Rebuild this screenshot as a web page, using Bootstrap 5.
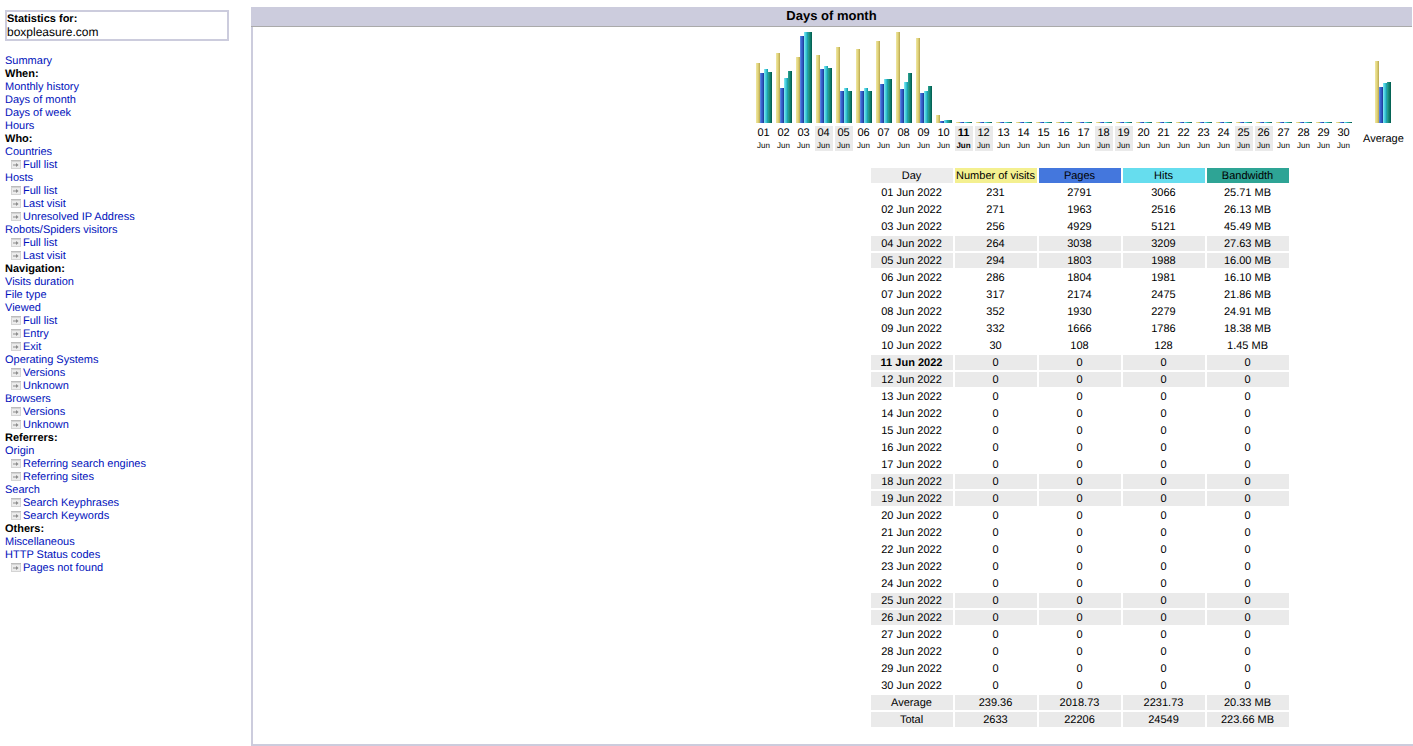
<!DOCTYPE html>
<html lang="en">
<head>
<meta charset="utf-8">
<title>Statistics for boxpleasure.com</title>
<link href="https://cdn.jsdelivr.net/npm/bootstrap@5.3.0/dist/css/bootstrap.min.css" rel="stylesheet">
<style>
html,body{height:746px;overflow:hidden}
body{background:#fff;color:#000;font:11px/13px "Liberation Sans",Arial,sans-serif;text-rendering:geometricPrecision}
a{color:#0011bb;text-decoration:none}
.shell{height:746px}
.side{width:251px;padding:10px 22px 0 5px}
.sitebox{height:31px;border:2px solid #ccccdd;padding:1px 0 0;line-height:13px;margin-bottom:14px}
.sitebox div+div{font-size:12px;line-height:13px}
.menu-sub{padding-left:6px}
.menu-sub svg{display:inline-block;vertical-align:-1px;margin-right:2px}
.menu-line{height:13px;white-space:nowrap}
.main{padding-top:7px;min-width:0}
.head-band{height:20px;margin-right:1px;background:#ccccdd;border-bottom:1px solid #aaaaaa;font-size:13px;line-height:18px;font-weight:700}
.body-band{height:719px;border-left:2px solid #ccccdd;border-bottom:2px solid #ccccdd;padding:5px 0 0 502px}
.plot{gap:2px}
.plot-col{width:18px}
.plot-avg{width:56px}
.bars{height:91px}
.pillar{width:4px;height:1px}
.pv{background:linear-gradient(90deg,#efe7a4,#e6da84 35%,#d4c46c 70%,#b4a44c)}
.pp{background:linear-gradient(90deg,#6490e8,#3c66d0 35%,#2e50b8 70%,#18348c)}
.ph{background:linear-gradient(90deg,#8aeaf4,#50d4e2 35%,#2cb8c8 70%,#14909f)}
.pk{background:linear-gradient(90deg,#2ea495,#1a8c7c 35%,#0a7464 70%,#00584a)}
.tick{height:25px;margin-top:3px;padding:1px 1px 0 0;text-align:center;font-size:11px;line-height:13px}
.tick small{display:block;font-size:8px;line-height:10px;margin-top:1px}
.tick-off{background:#eaeaea}
.tick-avg{height:25px;margin-top:3px;padding-top:7px;text-align:center;font-size:11px;line-height:13px;width:40px;margin-left:8px}
.stats{border-collapse:separate;border-spacing:2px;table-layout:fixed;width:422px;margin:15px 0 0 114px}
.stats td{width:82px;height:15px;padding:1px 1px 0 0;text-align:center;font-size:11px;line-height:14px;background:transparent}
.stats tr.shade td{background:#eaeaea}
.stats tr.top td:nth-child(1){background:#ececec}
.stats tr.top td:nth-child(2){background:#f4f090}
.stats tr.top td:nth-child(3){background:#4477dd}
.stats tr.top td:nth-child(4){background:#66ddee}
.stats tr.top td:nth-child(5){background:#2ea495}
</style>
</head>
<body>
<svg width="0" height="0" class="d-block position-absolute"><defs>
<symbol id="go" viewBox="0 0 10 9"><rect width="10" height="9" fill="#d4d4d4"/><rect y="0" width="10" height="1" fill="#bcbcbc"/><rect x="1" y="2" width="8" height="6" fill="#ececec"/><path d="M2 4.4h3V3l2.6 2L5 7V5.6H2z" fill="#8c8c8c"/></symbol>
</defs></svg>
<div class="shell d-flex">
<div class="side flex-shrink-0">
<div class="sitebox"><div class="fw-bold">Statistics for:</div><div>boxpleasure.com</div></div>
<div class="menu-line"><a href="#">Summary</a></div>
<div class="menu-line fw-bold">When:</div>
<div class="menu-line"><a href="#">Monthly history</a></div>
<div class="menu-line"><a href="#">Days of month</a></div>
<div class="menu-line"><a href="#">Days of week</a></div>
<div class="menu-line"><a href="#">Hours</a></div>
<div class="menu-line fw-bold">Who:</div>
<div class="menu-line"><a href="#">Countries</a></div>
<div class="menu-line menu-sub"><svg width="10" height="9"><use href="#go"/></svg><a href="#">Full list</a></div>
<div class="menu-line"><a href="#">Hosts</a></div>
<div class="menu-line menu-sub"><svg width="10" height="9"><use href="#go"/></svg><a href="#">Full list</a></div>
<div class="menu-line menu-sub"><svg width="10" height="9"><use href="#go"/></svg><a href="#">Last visit</a></div>
<div class="menu-line menu-sub"><svg width="10" height="9"><use href="#go"/></svg><a href="#">Unresolved IP Address</a></div>
<div class="menu-line"><a href="#">Robots/Spiders visitors</a></div>
<div class="menu-line menu-sub"><svg width="10" height="9"><use href="#go"/></svg><a href="#">Full list</a></div>
<div class="menu-line menu-sub"><svg width="10" height="9"><use href="#go"/></svg><a href="#">Last visit</a></div>
<div class="menu-line fw-bold">Navigation:</div>
<div class="menu-line"><a href="#">Visits duration</a></div>
<div class="menu-line"><a href="#">File type</a></div>
<div class="menu-line"><a href="#">Viewed</a></div>
<div class="menu-line menu-sub"><svg width="10" height="9"><use href="#go"/></svg><a href="#">Full list</a></div>
<div class="menu-line menu-sub"><svg width="10" height="9"><use href="#go"/></svg><a href="#">Entry</a></div>
<div class="menu-line menu-sub"><svg width="10" height="9"><use href="#go"/></svg><a href="#">Exit</a></div>
<div class="menu-line"><a href="#">Operating Systems</a></div>
<div class="menu-line menu-sub"><svg width="10" height="9"><use href="#go"/></svg><a href="#">Versions</a></div>
<div class="menu-line menu-sub"><svg width="10" height="9"><use href="#go"/></svg><a href="#">Unknown</a></div>
<div class="menu-line"><a href="#">Browsers</a></div>
<div class="menu-line menu-sub"><svg width="10" height="9"><use href="#go"/></svg><a href="#">Versions</a></div>
<div class="menu-line menu-sub"><svg width="10" height="9"><use href="#go"/></svg><a href="#">Unknown</a></div>
<div class="menu-line fw-bold">Referrers:</div>
<div class="menu-line"><a href="#">Origin</a></div>
<div class="menu-line menu-sub"><svg width="10" height="9"><use href="#go"/></svg><a href="#">Referring search engines</a></div>
<div class="menu-line menu-sub"><svg width="10" height="9"><use href="#go"/></svg><a href="#">Referring sites</a></div>
<div class="menu-line"><a href="#">Search</a></div>
<div class="menu-line menu-sub"><svg width="10" height="9"><use href="#go"/></svg><a href="#">Search Keyphrases</a></div>
<div class="menu-line menu-sub"><svg width="10" height="9"><use href="#go"/></svg><a href="#">Search Keywords</a></div>
<div class="menu-line fw-bold">Others:</div>
<div class="menu-line"><a href="#">Miscellaneous</a></div>
<div class="menu-line"><a href="#">HTTP Status codes</a></div>
<div class="menu-line menu-sub"><svg width="10" height="9"><use href="#go"/></svg><a href="#">Pages not found</a></div>
</div>
<div class="main flex-grow-1">
<div class="head-band text-center">Days of month</div>
<div class="body-band">
<div class="plot d-flex">
<div class="plot-col"><div class="bars d-flex align-items-end justify-content-center"><div class="pillar pv" style="height:60px"></div><div class="pillar pp" style="height:50px"></div><div class="pillar ph" style="height:54px"></div><div class="pillar pk" style="height:51px"></div></div><div class="tick">01<small>Jun</small></div></div>
<div class="plot-col"><div class="bars d-flex align-items-end justify-content-center"><div class="pillar pv" style="height:70px"></div><div class="pillar pp" style="height:35px"></div><div class="pillar ph" style="height:45px"></div><div class="pillar pk" style="height:52px"></div></div><div class="tick">02<small>Jun</small></div></div>
<div class="plot-col"><div class="bars d-flex align-items-end justify-content-center"><div class="pillar pv" style="height:66px"></div><div class="pillar pp" style="height:87px"></div><div class="pillar ph" style="height:91px"></div><div class="pillar pk" style="height:91px"></div></div><div class="tick">03<small>Jun</small></div></div>
<div class="plot-col"><div class="bars d-flex align-items-end justify-content-center"><div class="pillar pv" style="height:68px"></div><div class="pillar pp" style="height:54px"></div><div class="pillar ph" style="height:57px"></div><div class="pillar pk" style="height:55px"></div></div><div class="tick tick-off">04<small>Jun</small></div></div>
<div class="plot-col"><div class="bars d-flex align-items-end justify-content-center"><div class="pillar pv" style="height:76px"></div><div class="pillar pp" style="height:32px"></div><div class="pillar ph" style="height:35px"></div><div class="pillar pk" style="height:32px"></div></div><div class="tick tick-off">05<small>Jun</small></div></div>
<div class="plot-col"><div class="bars d-flex align-items-end justify-content-center"><div class="pillar pv" style="height:74px"></div><div class="pillar pp" style="height:32px"></div><div class="pillar ph" style="height:35px"></div><div class="pillar pk" style="height:32px"></div></div><div class="tick">06<small>Jun</small></div></div>
<div class="plot-col"><div class="bars d-flex align-items-end justify-content-center"><div class="pillar pv" style="height:82px"></div><div class="pillar pp" style="height:39px"></div><div class="pillar ph" style="height:44px"></div><div class="pillar pk" style="height:44px"></div></div><div class="tick">07<small>Jun</small></div></div>
<div class="plot-col"><div class="bars d-flex align-items-end justify-content-center"><div class="pillar pv" style="height:91px"></div><div class="pillar pp" style="height:34px"></div><div class="pillar ph" style="height:41px"></div><div class="pillar pk" style="height:50px"></div></div><div class="tick">08<small>Jun</small></div></div>
<div class="plot-col"><div class="bars d-flex align-items-end justify-content-center"><div class="pillar pv" style="height:85px"></div><div class="pillar pp" style="height:30px"></div><div class="pillar ph" style="height:32px"></div><div class="pillar pk" style="height:37px"></div></div><div class="tick">09<small>Jun</small></div></div>
<div class="plot-col"><div class="bars d-flex align-items-end justify-content-center"><div class="pillar pv" style="height:8px"></div><div class="pillar pp" style="height:2px"></div><div class="pillar ph" style="height:3px"></div><div class="pillar pk" style="height:3px"></div></div><div class="tick">10<small>Jun</small></div></div>
<div class="plot-col"><div class="bars d-flex align-items-end justify-content-center"><div class="pillar pv"></div><div class="pillar pp"></div><div class="pillar ph"></div><div class="pillar pk"></div></div><div class="tick tick-off fw-bold">11<small>Jun</small></div></div>
<div class="plot-col"><div class="bars d-flex align-items-end justify-content-center"><div class="pillar pv"></div><div class="pillar pp"></div><div class="pillar ph"></div><div class="pillar pk"></div></div><div class="tick tick-off">12<small>Jun</small></div></div>
<div class="plot-col"><div class="bars d-flex align-items-end justify-content-center"><div class="pillar pv"></div><div class="pillar pp"></div><div class="pillar ph"></div><div class="pillar pk"></div></div><div class="tick">13<small>Jun</small></div></div>
<div class="plot-col"><div class="bars d-flex align-items-end justify-content-center"><div class="pillar pv"></div><div class="pillar pp"></div><div class="pillar ph"></div><div class="pillar pk"></div></div><div class="tick">14<small>Jun</small></div></div>
<div class="plot-col"><div class="bars d-flex align-items-end justify-content-center"><div class="pillar pv"></div><div class="pillar pp"></div><div class="pillar ph"></div><div class="pillar pk"></div></div><div class="tick">15<small>Jun</small></div></div>
<div class="plot-col"><div class="bars d-flex align-items-end justify-content-center"><div class="pillar pv"></div><div class="pillar pp"></div><div class="pillar ph"></div><div class="pillar pk"></div></div><div class="tick">16<small>Jun</small></div></div>
<div class="plot-col"><div class="bars d-flex align-items-end justify-content-center"><div class="pillar pv"></div><div class="pillar pp"></div><div class="pillar ph"></div><div class="pillar pk"></div></div><div class="tick">17<small>Jun</small></div></div>
<div class="plot-col"><div class="bars d-flex align-items-end justify-content-center"><div class="pillar pv"></div><div class="pillar pp"></div><div class="pillar ph"></div><div class="pillar pk"></div></div><div class="tick tick-off">18<small>Jun</small></div></div>
<div class="plot-col"><div class="bars d-flex align-items-end justify-content-center"><div class="pillar pv"></div><div class="pillar pp"></div><div class="pillar ph"></div><div class="pillar pk"></div></div><div class="tick tick-off">19<small>Jun</small></div></div>
<div class="plot-col"><div class="bars d-flex align-items-end justify-content-center"><div class="pillar pv"></div><div class="pillar pp"></div><div class="pillar ph"></div><div class="pillar pk"></div></div><div class="tick">20<small>Jun</small></div></div>
<div class="plot-col"><div class="bars d-flex align-items-end justify-content-center"><div class="pillar pv"></div><div class="pillar pp"></div><div class="pillar ph"></div><div class="pillar pk"></div></div><div class="tick">21<small>Jun</small></div></div>
<div class="plot-col"><div class="bars d-flex align-items-end justify-content-center"><div class="pillar pv"></div><div class="pillar pp"></div><div class="pillar ph"></div><div class="pillar pk"></div></div><div class="tick">22<small>Jun</small></div></div>
<div class="plot-col"><div class="bars d-flex align-items-end justify-content-center"><div class="pillar pv"></div><div class="pillar pp"></div><div class="pillar ph"></div><div class="pillar pk"></div></div><div class="tick">23<small>Jun</small></div></div>
<div class="plot-col"><div class="bars d-flex align-items-end justify-content-center"><div class="pillar pv"></div><div class="pillar pp"></div><div class="pillar ph"></div><div class="pillar pk"></div></div><div class="tick">24<small>Jun</small></div></div>
<div class="plot-col"><div class="bars d-flex align-items-end justify-content-center"><div class="pillar pv"></div><div class="pillar pp"></div><div class="pillar ph"></div><div class="pillar pk"></div></div><div class="tick tick-off">25<small>Jun</small></div></div>
<div class="plot-col"><div class="bars d-flex align-items-end justify-content-center"><div class="pillar pv"></div><div class="pillar pp"></div><div class="pillar ph"></div><div class="pillar pk"></div></div><div class="tick tick-off">26<small>Jun</small></div></div>
<div class="plot-col"><div class="bars d-flex align-items-end justify-content-center"><div class="pillar pv"></div><div class="pillar pp"></div><div class="pillar ph"></div><div class="pillar pk"></div></div><div class="tick">27<small>Jun</small></div></div>
<div class="plot-col"><div class="bars d-flex align-items-end justify-content-center"><div class="pillar pv"></div><div class="pillar pp"></div><div class="pillar ph"></div><div class="pillar pk"></div></div><div class="tick">28<small>Jun</small></div></div>
<div class="plot-col"><div class="bars d-flex align-items-end justify-content-center"><div class="pillar pv"></div><div class="pillar pp"></div><div class="pillar ph"></div><div class="pillar pk"></div></div><div class="tick">29<small>Jun</small></div></div>
<div class="plot-col"><div class="bars d-flex align-items-end justify-content-center"><div class="pillar pv"></div><div class="pillar pp"></div><div class="pillar ph"></div><div class="pillar pk"></div></div><div class="tick">30<small>Jun</small></div></div>
<div class="plot-avg"><div class="bars d-flex align-items-end justify-content-center"><div class="pillar pv" style="height:62px"></div><div class="pillar pp" style="height:36px"></div><div class="pillar ph" style="height:40px"></div><div class="pillar pk" style="height:41px"></div></div><div class="tick-avg">Average</div></div>
</div>
<table class="stats">
<tr class="top"><td>Day</td><td>Number of visits</td><td>Pages</td><td>Hits</td><td>Bandwidth</td></tr>
<tr><td>01 Jun 2022</td><td>231</td><td>2791</td><td>3066</td><td>25.71 MB</td></tr>
<tr><td>02 Jun 2022</td><td>271</td><td>1963</td><td>2516</td><td>26.13 MB</td></tr>
<tr><td>03 Jun 2022</td><td>256</td><td>4929</td><td>5121</td><td>45.49 MB</td></tr>
<tr class="shade"><td>04 Jun 2022</td><td>264</td><td>3038</td><td>3209</td><td>27.63 MB</td></tr>
<tr class="shade"><td>05 Jun 2022</td><td>294</td><td>1803</td><td>1988</td><td>16.00 MB</td></tr>
<tr><td>06 Jun 2022</td><td>286</td><td>1804</td><td>1981</td><td>16.10 MB</td></tr>
<tr><td>07 Jun 2022</td><td>317</td><td>2174</td><td>2475</td><td>21.86 MB</td></tr>
<tr><td>08 Jun 2022</td><td>352</td><td>1930</td><td>2279</td><td>24.91 MB</td></tr>
<tr><td>09 Jun 2022</td><td>332</td><td>1666</td><td>1786</td><td>18.38 MB</td></tr>
<tr><td>10 Jun 2022</td><td>30</td><td>108</td><td>128</td><td>1.45 MB</td></tr>
<tr class="shade"><td class="fw-bold">11 Jun 2022</td><td>0</td><td>0</td><td>0</td><td>0</td></tr>
<tr class="shade"><td>12 Jun 2022</td><td>0</td><td>0</td><td>0</td><td>0</td></tr>
<tr><td>13 Jun 2022</td><td>0</td><td>0</td><td>0</td><td>0</td></tr>
<tr><td>14 Jun 2022</td><td>0</td><td>0</td><td>0</td><td>0</td></tr>
<tr><td>15 Jun 2022</td><td>0</td><td>0</td><td>0</td><td>0</td></tr>
<tr><td>16 Jun 2022</td><td>0</td><td>0</td><td>0</td><td>0</td></tr>
<tr><td>17 Jun 2022</td><td>0</td><td>0</td><td>0</td><td>0</td></tr>
<tr class="shade"><td>18 Jun 2022</td><td>0</td><td>0</td><td>0</td><td>0</td></tr>
<tr class="shade"><td>19 Jun 2022</td><td>0</td><td>0</td><td>0</td><td>0</td></tr>
<tr><td>20 Jun 2022</td><td>0</td><td>0</td><td>0</td><td>0</td></tr>
<tr><td>21 Jun 2022</td><td>0</td><td>0</td><td>0</td><td>0</td></tr>
<tr><td>22 Jun 2022</td><td>0</td><td>0</td><td>0</td><td>0</td></tr>
<tr><td>23 Jun 2022</td><td>0</td><td>0</td><td>0</td><td>0</td></tr>
<tr><td>24 Jun 2022</td><td>0</td><td>0</td><td>0</td><td>0</td></tr>
<tr class="shade"><td>25 Jun 2022</td><td>0</td><td>0</td><td>0</td><td>0</td></tr>
<tr class="shade"><td>26 Jun 2022</td><td>0</td><td>0</td><td>0</td><td>0</td></tr>
<tr><td>27 Jun 2022</td><td>0</td><td>0</td><td>0</td><td>0</td></tr>
<tr><td>28 Jun 2022</td><td>0</td><td>0</td><td>0</td><td>0</td></tr>
<tr><td>29 Jun 2022</td><td>0</td><td>0</td><td>0</td><td>0</td></tr>
<tr><td>30 Jun 2022</td><td>0</td><td>0</td><td>0</td><td>0</td></tr>
<tr class="shade"><td>Average</td><td>239.36</td><td>2018.73</td><td>2231.73</td><td>20.33 MB</td></tr>
<tr class="shade"><td>Total</td><td>2633</td><td>22206</td><td>24549</td><td>223.66 MB</td></tr>
</table>
</div>
</div>
</div>
<script src="https://cdn.jsdelivr.net/npm/bootstrap@5.3.0/dist/js/bootstrap.bundle.min.js"></script>
</body>
</html>
